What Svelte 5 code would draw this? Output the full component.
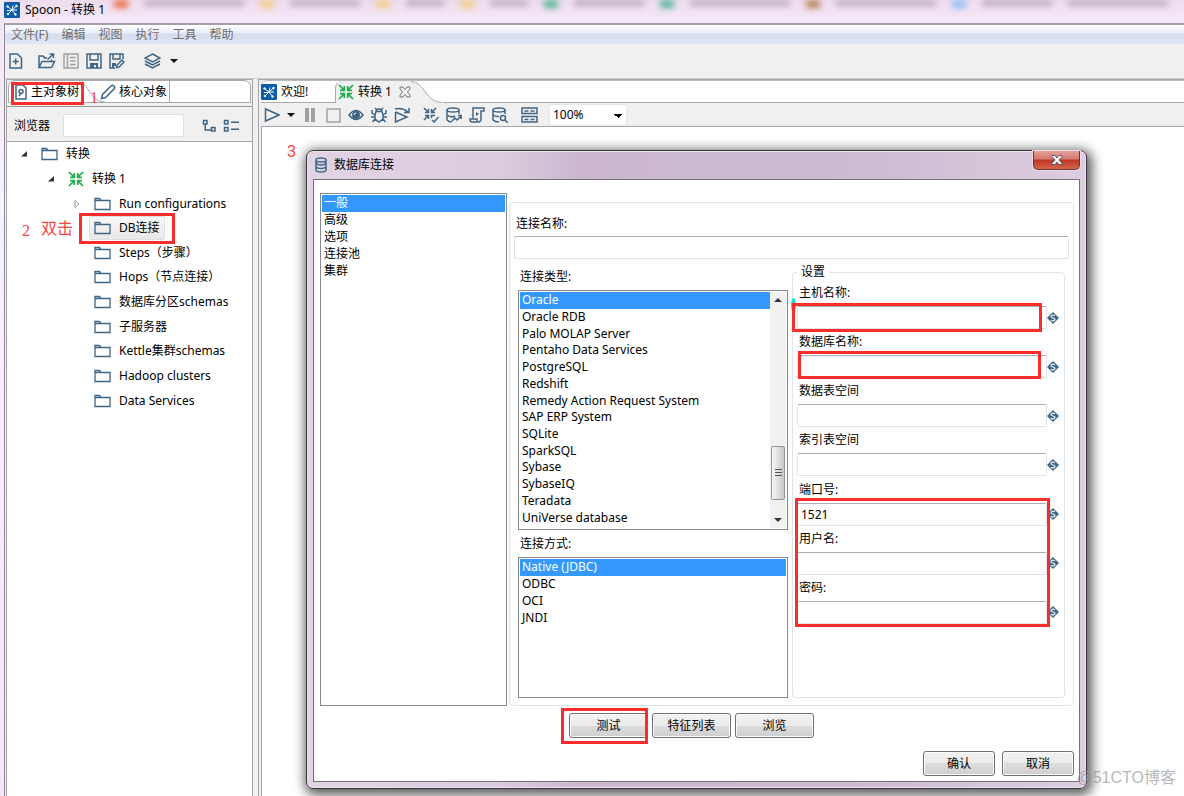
<script>
    let menus = ['文件(F)', '编辑', '视图', '执行', '工具', '帮助'];
    let categories = ['一般', '高级', '选项', '连接池', '集群'];
    let types = [
        'Oracle', 'Oracle RDB', 'Palo MOLAP Server', 'Pentaho Data Services', 'PostgreSQL',
        'Redshift', 'Remedy Action Request System', 'SAP ERP System', 'SQLite', 'SparkSQL',
        'Sybase', 'SybaseIQ', 'Teradata', 'UniVerse database'
    ];
    let methods = ['Native (JDBC)', 'ODBC', 'OCI', 'JNDI'];
    let folders = [
        'Run configurations', 'DB连接', 'Steps（步骤）', 'Hops（节点连接）', '数据库分区schemas',
        '子服务器', 'Kettle集群schemas', 'Hadoop clusters', 'Data Services'
    ];
    let fields = $state([
        {id: 'host', label: '主机名称:', value: ''},
        {id: 'database', label: '数据库名称:', value: ''},
        {id: 'dataspace', label: '数据表空间', value: ''},
        {id: 'indexspace', label: '索引表空间', value: ''},
        {id: 'port', label: '端口号:', value: '1521'},
        {id: 'user', label: '用户名:', value: ''},
        {id: 'password', label: '密码:', value: '', type: 'password'}
    ]);

    let category = $state('一般');
    let dbType = $state('Oracle');
    let method = $state('Native (JDBC)');
    let folder = $state('DB连接');
    let zoom = $state('100%');
    let search = $state('');
    let connection = $state('');
</script>

{#snippet logo()}
    <svg class="logo" width="16" height="16" viewBox="0 0 16 16">
        <rect width="16" height="16" rx="1" fill="#0b5cab" />
        <g stroke="#fff" fill="#fff">
            <path d="M3.5 4.5L8 8L12.5 4M8 8L4 12M8 8L11.5 12.5M3 8.5H8M8 8L9 3.5M8 8H13" fill="none" />
            <circle cx="3.5" cy="4.5" r=".8" /><circle cx="12.5" cy="4" r=".8" />
            <circle cx="4" cy="12" r=".8" /><circle cx="11.5" cy="12.5" r=".8" />
        </g>
    </svg>
{/snippet}

{#snippet transIcon()}
    <svg width="16" height="16" viewBox="0 0 16 16" fill="none" stroke="#1fae4b" stroke-width="1.7">
        <path d="M1 1L6.2 6.2M15 1L9.8 6.2M1 15L6.2 9.8M15 15L9.8 9.8M2 6.3H6.3V2M14 6.3H9.7V2M2 9.7H6.3V14M14 9.7H9.7V14" />
    </svg>
{/snippet}

{#snippet folderIcon()}
    <svg width="17" height="14" viewBox="0 0 17 14" fill="none" stroke="#3f6584" stroke-width="1.3">
        <path d="M1 12.5V1.500H5.500L7 3.500H16V12.500ZM1 3.500H7" />
    </svg>
{/snippet}

{#snippet listbox(items, label, current, pick)}
    <ul class="rows" role="listbox" aria-label={label}>
        {#each items as item}
            <li role="presentation">
                <button class="row" role="option" aria-selected={item === current} class:selected={item === current} onclick={() => pick(item)}>{item}</button>
            </li>
        {/each}
    </ul>
{/snippet}

<div class="window">
    <header class="titlebar">
        <div class="backdrop" aria-hidden="true">
            <i class="red"></i><b class="w10"></b><i></i><b class="w7"></b><i></i><b class="w4"></b><i></i><b class="w4"></b>
            <i class="green"></i><b class="w7"></b><i class="green"></i><b class="w10"></b><i class="brown"></i><b class="w10"></b><i class="blue"></i><b class="w7"></b><b class="w10"></b>
        </div>
        {@render logo()}
        <span>Spoon - 转换 1</span>
    </header>

    <div class="client">
        <nav class="menubar">
            {#each menus as menu}
                <button>{menu}</button>
            {/each}
        </nav>

        <div class="toolbar">
            <button class="new" aria-label="New">
                <svg class="line" width="14" height="16" viewBox="0 0 14 16"><path d="M1 1H8.5L12.5 5V15H1ZM6.7 5.5V11.5M3.7 8.5H9.7" /></svg>
            </button>
            <button class="open" aria-label="Open">
                <svg class="line" width="18" height="16" viewBox="0 0 18 16"><path d="M1 14.5V3H5L6.5 5H9M1 14.5L4 8.5H16.5L13.5 14.5ZM13.5 8V6.5M9.5 6.5L15.5 1M11.5 1H15.5V5" /></svg>
            </button>
            <button aria-label="Explore">
                <svg class="line muted" width="16" height="16" viewBox="0 0 16 16"><path d="M1 1H15V15H1ZM4.5 1V15M7 4.5H12.5M7 8H12.5M7 11.5H12.5" /></svg>
            </button>
            <button aria-label="Save">
                <svg class="line" width="16" height="16" viewBox="0 0 16 16"><path d="M1 1H15V15H1ZM4 1V7H12V1" /><path class="solid" d="M4 10H12V15H10V12H8V15H4Z" /></svg>
            </button>
            <button class="saveas" aria-label="Save as">
                <svg class="line" width="16" height="16" viewBox="0 0 16 16"><path d="M6 15H1V1H14V6M4 1V6H11V1M7.5 14.5L8 12L13 7L15 9L10 14Z" /><path class="solid" d="M3 10H7V13H5V15H3Z" /></svg>
            </button>
            <button class="layers" aria-label="Perspective">
                <svg class="line" width="17" height="16" viewBox="0 0 17 16"><path d="M8.5 1L16 5L8.5 9L1 5ZM1 8L8.5 12L16 8M1 11L8.5 15L16 11" /></svg>
            </button>
            <button class="caret" aria-label="Choose perspective"></button>
        </div>

        <div class="panes">
            <aside class="sidebar">
                <div class="tabs side-tabs">
                    <button class="tab tree-tab">
                        <svg class="line" width="12" height="16" viewBox="0 0 12 16"><path d="M1 1H8L11 4V15H1ZM4 12L6 9" /><circle cx="6" cy="7.5" r="2" /></svg>
                        主对象树
                        <span class="mark mark-tab"></span>
                    </button>
                    <svg class="slope" width="30" height="24" viewBox="0 0 30 24"><path d="M0 1C10 1 10 21 26 21" /></svg>
                    <button class="tab core-tab">
                        <svg class="line" width="16" height="16" viewBox="0 0 16 16"><path d="M1.5 14.5L2.5 10.5L11 2Q12.5 .5 14 2Q15.5 3.5 14 5L5.5 13.5Z" /></svg>
                        核心对象
                    </button>
                    <span class="note note-one">1</span>
                </div>
                <div class="search">
                    <label for="search">浏览器</label>
                    <input id="search" bind:value={search} />
                    <button aria-label="Expand all">
                        <svg class="line" width="15" height="14" viewBox="0 0 15 14"><path d="M1.5 1.5H5V5H1.5ZM3.2 5V11H9M9.5 8.5H13V12H9.5Z" /></svg>
                    </button>
                    <button aria-label="Collapse all">
                        <svg class="line" width="17" height="14" viewBox="0 0 17 14"><path d="M1.5 1.5H5V5H1.5ZM1.5 8.5H5V12H1.5ZM8 3.2H16M8 10.2H16" /></svg>
                    </button>
                </div>
                <div class="tree">
                    <div class="nodes">
                        <div class="node root">
                            <svg class="arrow" width="8" height="8" viewBox="0 0 8 8"><path d="M7 1V6.5H1Z" fill="#333" /></svg>
                            {@render folderIcon()}<span>转换</span>
                        </div>
                        <div class="node child">
                            <svg class="arrow" width="8" height="8" viewBox="0 0 8 8"><path d="M7 1V6.5H1Z" fill="#333" /></svg>
                            {@render transIcon()}<span>转换 1</span>
                        </div>
                        {#each folders as name, i}
                            <div class="node leaf">
                                <svg class="arrow" width="8" height="10" viewBox="0 0 8 10">
                                    {#if i === 0}<path d="M2 1.5L6 5L2 8.5Z" fill="#fff" stroke="#999" />{/if}
                                </svg>
                                <button class:active={name === folder} onclick={() => folder = name}>
                                    {@render folderIcon()}<span>{name}</span>
                                </button>
                                {#if i === 1}
                                    <span class="mark mark-db"></span>
                                    <span class="note note-two">2</span>
                                    <span class="note note-click">双击</span>
                                {/if}
                            </div>
                        {/each}
                    </div>
                </div>
            </aside>

            <main class="editor">
                <div class="tabs editor-tabs">
                    <button class="tab welcome">{@render logo()}欢迎!</button>
                    <button class="tab current">
                        {@render transIcon()}转换 1
                        <svg class="x" width="12" height="12" viewBox="0 0 12 12"><path d="M1 1H4L6 3.5L8 1H11V3L8.5 6L11 9V11H8L6 8.5L4 11H1V9L3.5 6L1 3Z" /></svg>
                    </button>
                    <svg class="slope" width="32" height="22" viewBox="0 0 32 22"><path class="fill" d="M0 .5C14 .5 14 21.5 31 21.5V22H0Z" /><path d="M0 .5C14 .5 14 21.5 31 21.5" /></svg>
                    <span class="rest"></span>
                </div>
                <div class="runbar">
                    <button aria-label="Run"><svg class="line" width="16" height="16" viewBox="0 0 16 16"><path d="M1.5 2V14L15 8Z" /></svg></button>
                    <button class="caret" aria-label="Run options"></button>
                    <button aria-label="Pause"><svg class="line muted bars" width="16" height="16" viewBox="0 0 16 16"><path d="M5 1V15M11 1V15" /></svg></button>
                    <button aria-label="Stop"><svg class="line muted" width="16" height="16" viewBox="0 0 16 16"><path d="M2 2H15V15H2Z" /></svg></button>
                    <button aria-label="Preview"><svg class="line" width="16" height="16" viewBox="0 0 16 16"><path d="M1 8Q8 -1 15 8Q8 17 1 8Z" /><circle class="solid" cx="8" cy="8" r="4" /><path class="glint" d="M6 8Q6 6 8 6" /></svg></button>
                    <button aria-label="Debug"><svg class="line" width="16" height="16" viewBox="0 0 16 16"><path d="M5 4.5H11L12 8V12L8 15L4 12V8ZM5 4.5C5 1 11 1 11 4.5M4 8L1 6V3M12 8L15 6V3M4 10H0M12 10H16M4 12L1.5 15M12 12L14.5 15M4 1L6 3M12 1L10 3" /></svg></button>
                    <button class="replay" aria-label="Replay"><svg class="line" width="16" height="16" viewBox="0 0 16 16"><path d="M1.5 5V15L13 10L1.5 5M1 2Q8 0 14 5M10 5.5H15V1" /></svg></button>
                    <button aria-label="Verify"><svg class="line" width="16" height="16" viewBox="0 0 16 16"><path d="M1 1L5 5M13 1L9 5M1 13L5 9M2 5.5H5.5V2M12 5.5H8.5V2M2 8.5H5.5V12M8.5 11V8.5H12M9 13L11 15L15.5 10" /></svg></button>
                    <button aria-label="Impact"><svg class="line" width="16" height="16" viewBox="0 0 16 16"><path d="M13 7V3M1 3V13Q3 15 6 15M1 8Q5 11 9 9M13 3Q13 5 7 5T1 3T7 1T13 3M6 14L9 11L11 13L15 9M12 8.5H15.2V12" /></svg></button>
                    <button aria-label="SQL"><svg class="line" width="16" height="16" viewBox="0 0 16 16"><path d="M4 11V1H15V4H12V12Q12 15 9 15H3Q1 15 1 12H8V14" /><path class="solid" d="M7 5L10 7L7 9Z" /></svg></button>
                    <button class="explore" aria-label="Explore database"><svg class="line" width="16" height="16" viewBox="0 0 16 16"><path d="M13 7V3M1 3V13Q3 15 7 15M1 8Q4 10 7 9.5M13 3Q13 5 7 5T1 3T7 1T13 3M13 13L16 16" /><circle cx="11" cy="11" r="2.5" /></svg></button>
                    <button aria-label="Show results"><svg class="line" width="17" height="16" viewBox="0 0 17 16"><path d="M1 1H16V6.5H1ZM1 9.5H16V15H1ZM3.5 4H7.5M9.5 4H13.5M3.5 12.5H7.5M9.5 12.5H13.5" /></svg></button>
                    <select bind:value={zoom} aria-label="Zoom">
                        <option>100%</option>
                        <option>75%</option>
                        <option>50%</option>
                    </select>
                </div>
                <div class="canvas">
                    <span class="note note-three">3</span>

                    <section class="dialog" role="dialog" aria-labelledby="dialog-title">
                        <header>
                            <svg class="line" width="12" height="16" viewBox="0 0 12 16"><path d="M1 3V13Q1 15 6 15T11 13V3M1 6Q2 8 6 8T11 6M1 9.5Q2 11.5 6 11.5T11 9.5M11 3Q11 5 6 5T1 3T6 1T11 3" /></svg>
                            <h1 id="dialog-title">数据库连接</h1>
                            <button class="close" aria-label="Close">
                                <svg width="12" height="10" viewBox="0 0 12 10"><path d="M1 .5H4L6 3L8 .5H11V1.5L8 5L11 8.5V9.5H8L6 7L4 9.5H1V8.5L4 5L1 1.5Z" fill="#fff" stroke="#555e78" /></svg>
                            </button>
                        </header>
                        <div class="body">
                            <div class="columns">
                                <div class="box categories">
                                    {@render listbox(categories, '分类', category, (v) => category = v)}
                                </div>
                                <div class="group">
                                    <label class="name-label" for="name">连接名称:</label>
                                    <input id="name" class="name" bind:value={connection} />
                                    <div class="split">
                                        <div class="choices">
                                            <h2>连接类型:</h2>
                                            <div class="box types">
                                                {@render listbox(types, '连接类型', dbType, (v) => dbType = v)}
                                                <div class="scrollbar">
                                                    <i class="up"></i>
                                                    <i class="thumb"></i>
                                                    <i class="down"></i>
                                                </div>
                                            </div>
                                            <h2>连接方式:</h2>
                                            <div class="box methods">
                                                {@render listbox(methods, '连接方式', method, (v) => method = v)}
                                            </div>
                                        </div>
                                        <fieldset>
                                            <legend>设置</legend>
                                            <div class="fields">
                                                {#each fields as field}
                                                    <div class="field">
                                                        <label for={field.id}>{field.label}</label>
                                                        <div class="entry">
                                                            <input id={field.id} type={field.type ?? 'text'} bind:value={field.value} />
                                                            <svg width="12" height="12" viewBox="0 0 12 12"><path d="M6 0L12 6L6 12L0 6Z" fill="#3f6584" /><path d="M8 3.8Q6 2.500 4.500 3.800T6 6T7.500 8.300T4 8.200" fill="none" stroke="#e8eef3" stroke-width="1.2" /></svg>
                                                        </div>
                                                    </div>
                                                {/each}
                                                <i class="speck"></i>
                                                <span class="mark mark-host"></span>
                                                <span class="mark mark-database"></span>
                                                <span class="mark mark-login"></span>
                                            </div>
                                        </fieldset>
                                    </div>
                                </div>
                            </div>
                            <div class="actions">
                                <button>测试<span class="mark mark-test"></span></button>
                                <button>特征列表</button>
                                <button>浏览</button>
                            </div>
                            <footer>
                                <button>确认</button>
                                <button>取消</button>
                            </footer>
                        </div>
                    </section>
                </div>
            </main>
        </div>
    </div>
    <span class="watermark">@51CTO博客</span>
</div>

<style>
    :global(body) {
        margin: 0;
    }
    .window, .window * {
        box-sizing: border-box;
    }
    .window {
        position: relative;
        display: flex;
        flex-direction: column;
        min-height: 100vh;
        overflow: hidden;
        padding-left: 4px;
        background: linear-gradient(#f3e5f5, #f9f2fb 200px, #f6e6f5);
        font: 12px/16px "Noto Sans", "Noto Sans CJK SC", sans-serif;
        color: #000;
    }
    button, input, select {
        font: inherit;
        color: inherit;
    }
    button {
        display: flex;
        align-items: center;
        padding: 0;
        border: 0;
        background: none;
    }
    svg {
        display: block;
        flex: none;
    }
    h1, h2 {
        margin: 0;
        font-size: 12px;
        font-weight: 400;
    }

    /* outline icons */
    .line {
        fill: none;
        stroke: #3f6584;
        stroke-width: 1.5;
    }
    .muted {
        stroke: #a0a0a0;
    }
    .bars {
        stroke-width: 4;
    }
    .solid {
        fill: #3f6584;
        stroke: none;
    }
    .glint {
        stroke: #fff;
        stroke-width: 1;
    }

    .titlebar {
        position: relative;
        display: flex;
        align-items: center;
        gap: 5px;
        height: 23px;
        padding-bottom: 4px;
        background: linear-gradient(#ecdcee, #f8e9fa);
    }
    .titlebar span {
        position: relative;
    }
    .titlebar .logo {
        position: relative;
    }
    .backdrop {
        position: absolute;
        inset: 0 0 auto 110px;
        display: flex;
        gap: 16px;
        height: 8px;
        overflow: hidden;
        filter: blur(3px);
    }
    .backdrop i {
        flex: none;
        width: 14px;
        background: #f3cf86;
    }
    .backdrop .red { background: #ee6c47; }
    .backdrop .green { background: #55b796; }
    .backdrop .brown { background: #b48456; }
    .backdrop .blue { background: #8fc1f2; }
    .backdrop b {
        flex: none;
        height: 6px;
        background: #b9abc0;
    }
    .backdrop .w4 { width: 38px; }
    .backdrop .w7 { width: 70px; }
    .backdrop .w10 { width: 100px; }

    .client {
        display: flex;
        flex: 1;
        flex-direction: column;
        border-top: 2px solid #a59fa8;
        border-left: 1px solid #8c8a90;
        background: #f0f0f0;
    }
    .menubar {
        display: flex;
        gap: 13px;
        height: 19px;
        padding-left: 6px;
        background: linear-gradient(#fff, #eaeef8 40%, #d5dcec 50%, #dfe6f4);
        color: #6e6e6e;
    }
    .toolbar {
        display: flex;
        align-items: center;
        gap: 7px;
        height: 35px;
        padding-left: 4px;
        border-bottom: 1px solid #c8c8cc;
    }
    .toolbar .new { margin-right: 8px; }
    .toolbar .saveas { margin-right: 12px; }
    .toolbar .layers { margin-right: 2px; }
    .caret::before {
        content: '';
        border: 4px solid transparent;
        border-top: 4px solid #111;
        border-bottom: 0;
    }

    .panes {
        display: flex;
        flex: 1;
        gap: 5px;
        padding-left: 1px;
    }
    .sidebar {
        display: flex;
        flex-direction: column;
        width: 247px;
        border: 1px solid #a6a6ab;
        border-bottom: 0;
    }
    .tabs {
        display: flex;
        background: #fff;
    }
    .tab {
        position: relative;
    }
    .slope {
        fill: none;
        stroke: #aaa;
    }
    .side-tabs {
        position: relative;
        height: 23px;
        margin: 0 1px;
        border: 1px solid #aaa;
        border-radius: 7px 7px 0 0;
    }
    .tree-tab {
        gap: 4px;
        width: 70px;
        padding-left: 6px;
        white-space: nowrap;
    }
    .core-tab {
        gap: 3px;
        padding: 0 2px 0 9px;
        border-right: 1px solid #aaa;
    }
    .side-tabs .slope {
        margin-right: -18px;
    }
    .search {
        display: flex;
        align-items: center;
        height: 36px;
        margin-top: 3px;
        padding: 3px 5px 0 7px;
        border-top: 1px solid #999;
        border-bottom: 1px solid #a6a6ab;
    }
    .search input {
        width: 121px;
        height: 23px;
        margin: 0 18px 0 13px;
        padding: 0 4px;
        border: 1px solid #dde1e8;
        border-radius: 2px;
    }
    .search button + button {
        margin-left: 6px;
    }
    .tree {
        flex: 1;
        background: #fff;
    }
    .nodes {
        display: grid;
        grid-auto-rows: 1fr;
        height: 271px;
    }
    .node {
        position: relative;
        display: flex;
        align-items: center;
        gap: 8px;
        min-height: 0;
    }
    .node .arrow {
        margin-right: 5px;
    }
    .root { padding-left: 13px; }
    .child { padding-left: 40px; }
    .leaf { padding-left: 66px; }
    .leaf .arrow {
        margin-right: 0;
    }
    .node button {
        gap: 8px;
        height: 24px;
        padding: 0 4px;
        border: 1px solid transparent;
        border-radius: 2px;
        white-space: nowrap;
    }
    .node .active {
        border-color: #dedede;
        background: linear-gradient(#f8f8f8, #e8e8e8);
    }

    .editor {
        display: flex;
        flex: 1;
        flex-direction: column;
        min-width: 0;
        border-top: 1px solid #a6a6ab;
        border-left: 1px solid #a6a6ab;
        padding-left: 2px;
    }
    .editor-tabs {
        height: 23px;
        border-top: 1px solid #bbb;
        border-radius: 7px 0 0 0;
    }
    .welcome {
        gap: 4px;
        width: 74px;
        border-bottom: 1px solid #aaa;
    }
    .current {
        gap: 4px;
        padding-left: 2px;
        border-left: 1px solid #aaa;
        border-radius: 7px 0 0 0;
        background: #f0f0f0;
    }
    .x {
        margin-left: 3px;
        fill: none;
        stroke: #777;
    }
    .slope .fill {
        fill: #f0f0f0;
        stroke: none;
    }
    .rest {
        flex: 1;
        border-bottom: 1px solid #aaa;
    }
    .runbar {
        display: flex;
        align-items: center;
        gap: 7px;
        height: 23px;
        padding-left: 3px;
    }
    .runbar .replay { margin-right: 6px; }
    .runbar .explore { margin-right: 6px; }
    .runbar select {
        appearance: none;
        width: 78px;
        height: 22px;
        margin-left: 4px;
        padding: 0 3px;
        border: 1px solid #e6e6e6;
        border-radius: 0;
        background: conic-gradient(from -45deg at 4px 4px, #000 90deg, transparent 0) 64px 9px / 8px 4px no-repeat, #fff;
    }
    .canvas {
        position: relative;
        flex: 1;
        min-height: 669px;
        border-top: 1px solid #a6a6ab;
        border-left: 1px solid #a6a6ab;
        background: #fff;
    }

    .dialog {
        position: absolute;
        top: 23px;
        left: 44px;
        width: 781px;
        padding: 0 6px 6px;
        border: 1px solid #3a343c;
        border-radius: 7px;
        background: linear-gradient(90deg, #e2d3e4, #dccbdf 25%, #cbb8cf 35%, #cdbbd1 70%, #dccde0);
        box-shadow: 0 0 0 1px #ece2ee inset, 2px 3px 12px 3px rgba(0, 0, 0, .65);
    }
    .dialog header {
        display: flex;
        align-items: center;
        gap: 7px;
        height: 28px;
        padding-left: 2px;
    }
    .close {
        align-self: flex-start;
        justify-content: center;
        width: 47px;
        height: 19px;
        margin-left: auto;
        border: 1px solid #6f3038;
        border-top: 0;
        border-radius: 0 0 5px 5px;
        background: linear-gradient(#e3a29a, #d4786c 45%, #bd3522 50%, #d5654d);
        box-shadow: 0 0 0 1px #f0dde6;
    }
    .body {
        border: 1px solid #77707b;
        padding: 13px 5px 5px 6px;
        background: #fff;
    }
    .columns {
        display: flex;
        gap: 2px;
    }
    .box {
        display: flex;
        border: 1px solid #858991;
        padding: 1px;
        background: #fff;
    }
    .categories {
        width: 187px;
        height: 513px;
    }
    .rows {
        display: grid;
        flex: 1;
        grid-auto-rows: 1fr;
        margin: 0;
        padding: 0;
        list-style: none;
    }
    .rows li {
        display: flex;
        min-height: 0;
    }
    .row {
        flex: 1;
        min-height: 0;
        padding-left: 2px;
        line-height: 16px;
        white-space: nowrap;
    }
    .selected {
        background: #3399ff;
        color: #fff;
    }
    .categories .rows { height: 84px; }
    .types .rows { height: 234px; }
    .methods .rows { height: 67px; }
    .group {
        display: flex;
        flex: 1;
        flex-direction: column;
        min-width: 0;
        margin-top: 9px;
        padding: 13px 4px 6px;
        border: 1px solid #dde5ec;
        border-radius: 4px;
    }
    .name-label {
        margin-left: 2px;
    }
    .name {
        width: 100%;
        height: 23px;
        margin-top: 4px;
    }
    .name, .entry input {
        padding: 0 3px;
        border: 1px solid #e0e4ea;
        border-top-color: #abadb3;
        border-radius: 2px;
        background: #fff;
    }
    .split {
        display: flex;
        gap: 4px;
        padding: 10px 4px 0;
    }
    .choices {
        width: 270px;
    }
    .choices h2 {
        padding-left: 2px;
    }
    .types {
        height: 240px;
        margin: 5px 0 6px;
    }
    .methods {
        height: 141px;
        margin-top: 5px;
    }
    .scrollbar {
        display: flex;
        flex-direction: column;
        align-items: center;
        width: 16px;
        padding: 6px 0;
        background: #f1f1f1;
    }
    .up, .down {
        border: 4px solid transparent;
    }
    .up {
        border-top: 0;
        border-bottom-color: #333;
    }
    .down {
        margin-top: auto;
        border-bottom: 0;
        border-top-color: #333;
    }
    .thumb {
        width: 14px;
        height: 54px;
        margin-top: 144px;
        border: 1px solid #979797;
        border-radius: 2px;
        background:
            repeating-linear-gradient(#555 0 1px, transparent 1px 3px) center / 7px 8px no-repeat,
            linear-gradient(90deg, #f5f5f5, #e0e0e0 50%, #c8c8cc);
    }

    fieldset {
        flex: 1;
        min-width: 0;
        margin: -5px 0 0;
        padding: 0 5px 0 4px;
        border: 1px solid #dde5ec;
        border-radius: 4px;
    }
    legend {
        padding: 0 4px;
    }
    .fields {
        position: relative;
        display: grid;
        grid-auto-rows: 1fr;
        height: 344px;
        margin-top: 5px;
    }
    .field label {
        display: block;
        padding-left: 2px;
    }
    .entry {
        display: flex;
        align-items: center;
        margin-top: 5px;
    }
    .entry input {
        flex: 1;
        min-width: 0;
        height: 23px;
    }
    .actions {
        display: flex;
        gap: 4px;
        padding: 7px 0 0 249px;
    }
    .actions button, footer button {
        position: relative;
        justify-content: center;
        width: 79px;
        height: 25px;
        border: 1px solid #707070;
        border-radius: 3px;
        background: linear-gradient(#f2f2f2, #ebebeb 50%, #dddddd 50%, #cfcfcf);
        box-shadow: 0 0 0 1px #fcfcfc inset;
    }
    footer {
        display: flex;
        justify-content: flex-end;
        gap: 7px;
        padding-top: 13px;
    }
    footer button {
        width: 72px;
    }

    /* red annotations over the windows */
    .mark {
        position: absolute;
        border: 3px solid #fb2c2c;
        pointer-events: none;
    }
    .mark-tab { inset: 1px -5px -3px 2px; }
    .mark-db { inset: -3px auto -3px 72px; width: 96px; }
    .mark-host { top: 18px; left: -5px; width: 250px; height: 29px; }
    .mark-database { top: 66px; left: 1px; width: 243px; height: 28px; }
    .mark-login { top: 213px; left: -2px; width: 255px; height: 129px; }
    .mark-test { inset: -6px -1px -7px -9px; }
    .speck {
        position: absolute;
        top: 13px;
        left: -6px;
        width: 5px;
        height: 14px;
        border-radius: 50%;
        background: #1edada;
    }
    .note {
        position: absolute;
        color: #fb4343;
        font-size: 16px;
    }
    .note-one { top: 9px; left: 81px; font-family: "Liberation Serif", serif; }
    .note-two { left: 15px; top: 7px; font-family: "Liberation Serif", serif; }
    .note-click { left: 34px; }
    .note-three { top: 17px; left: 25px; font-family: "Liberation Sans", sans-serif; }
    .watermark {
        position: absolute;
        right: 8px;
        bottom: 8px;
        color: rgba(150, 150, 150, .7);
        font: 16px/20px "Liberation Sans", "Noto Sans CJK SC", sans-serif;
    }
</style>
